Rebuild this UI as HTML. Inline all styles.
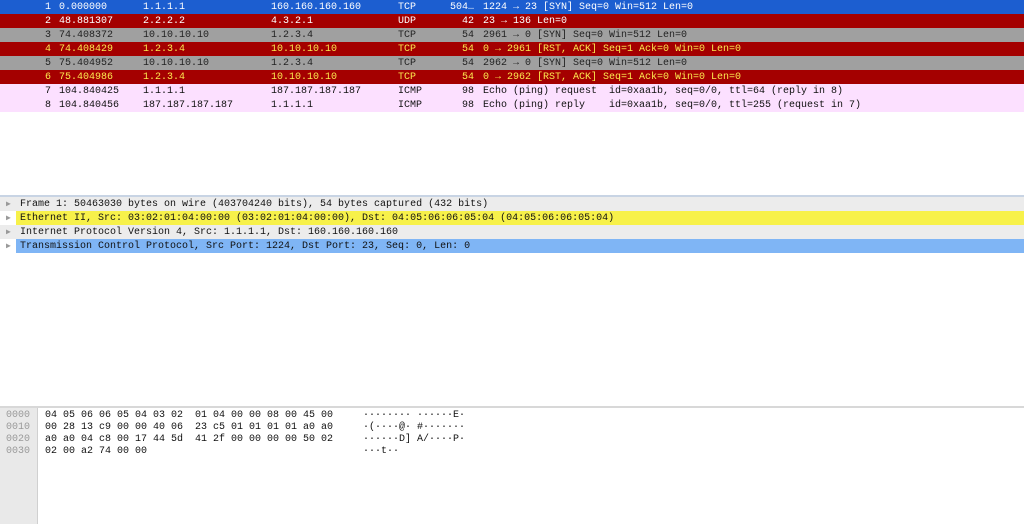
<!DOCTYPE html>
<html><head><style>
body{margin:0;width:1024px;height:524px;overflow:hidden;background:#fff;font-family:"Liberation Mono",monospace;font-size:10px;position:relative}
.r{position:absolute;left:0;width:1024px;height:14px;line-height:15px;white-space:pre}
.r span{position:absolute;top:0}
.no{right:973px;text-align:right}
.t{left:59px}.s{left:143px}.d{left:271px}.p{left:398px}.l{right:550px;text-align:right}.i{left:483px}
.blue{background:#1c5ed0;color:#fff}
.red{background:#a40000;color:#fff}
.redy{background:#a40000;color:#fce94f}
.gray{background:#a0a0a0;color:#222}
.pink{background:#fce0ff;color:#111}
.det{position:absolute;left:0;width:1024px;height:14px;line-height:16px;white-space:pre;color:#111}
.det .a{position:absolute;left:6px;top:0;color:#999;font-size:8px}
.det .tx{position:absolute;left:16px;right:0;top:0;height:14px;padding-left:4px}
.hx{position:absolute;white-space:pre;line-height:12px;color:#111}
</style></head><body>
<div class="r blue" style="top:0"><span class="no">1</span><span class="t">0.000000</span><span class="s">1.1.1.1</span><span class="d">160.160.160.160</span><span class="p">TCP</span><span class="l">504…</span><span class="i">1224 → 23 [SYN] Seq=0 Win=512 Len=0</span></div>
<div class="r red" style="top:14px"><span class="no">2</span><span class="t">48.881307</span><span class="s">2.2.2.2</span><span class="d">4.3.2.1</span><span class="p">UDP</span><span class="l">42</span><span class="i">23 → 136 Len=0</span></div>
<div class="r gray" style="top:28px"><span class="no">3</span><span class="t">74.408372</span><span class="s">10.10.10.10</span><span class="d">1.2.3.4</span><span class="p">TCP</span><span class="l">54</span><span class="i">2961 → 0 [SYN] Seq=0 Win=512 Len=0</span></div>
<div class="r redy" style="top:42px"><span class="no">4</span><span class="t">74.408429</span><span class="s">1.2.3.4</span><span class="d">10.10.10.10</span><span class="p">TCP</span><span class="l">54</span><span class="i">0 → 2961 [RST, ACK] Seq=1 Ack=0 Win=0 Len=0</span></div>
<div class="r gray" style="top:56px"><span class="no">5</span><span class="t">75.404952</span><span class="s">10.10.10.10</span><span class="d">1.2.3.4</span><span class="p">TCP</span><span class="l">54</span><span class="i">2962 → 0 [SYN] Seq=0 Win=512 Len=0</span></div>
<div class="r redy" style="top:70px"><span class="no">6</span><span class="t">75.404986</span><span class="s">1.2.3.4</span><span class="d">10.10.10.10</span><span class="p">TCP</span><span class="l">54</span><span class="i">0 → 2962 [RST, ACK] Seq=1 Ack=0 Win=0 Len=0</span></div>
<div class="r pink" style="top:84px"><span class="no">7</span><span class="t">104.840425</span><span class="s">1.1.1.1</span><span class="d">187.187.187.187</span><span class="p">ICMP</span><span class="l">98</span><span class="i">Echo (ping) request  id=0xaa1b, seq=0/0, ttl=64 (reply in 8)</span></div>
<div class="r pink" style="top:98px"><span class="no">8</span><span class="t">104.840456</span><span class="s">187.187.187.187</span><span class="d">1.1.1.1</span><span class="p">ICMP</span><span class="l">98</span><span class="i">Echo (ping) reply    id=0xaa1b, seq=0/0, ttl=255 (request in 7)</span></div>

<div style="position:absolute;top:195px;left:0;width:1024px;height:2px;background:#c8d4e4"></div>
<div class="det" style="top:197px;background:#ececec"><span class="a">▶</span><span class="tx">Frame 1: 50463030 bytes on wire (403704240 bits), 54 bytes captured (432 bits)</span></div>
<div class="det" style="top:211px"><span class="a">▶</span><span class="tx" style="background:#f7f14a">Ethernet II, Src: 03:02:01:04:00:00 (03:02:01:04:00:00), Dst: 04:05:06:06:05:04 (04:05:06:06:05:04)</span></div>
<div class="det" style="top:225px;background:#ececec"><span class="a">▶</span><span class="tx">Internet Protocol Version 4, Src: 1.1.1.1, Dst: 160.160.160.160</span></div>
<div class="det" style="top:239px"><span class="a">▶</span><span class="tx" style="background:#7fb5f5">Transmission Control Protocol, Src Port: 1224, Dst Port: 23, Seq: 0, Len: 0</span></div>

<div style="position:absolute;top:406px;left:0;width:1024px;height:2px;background:#d8d8d8"></div>
<div style="position:absolute;top:408px;left:0;width:37px;height:116px;background:#e9e9e9;border-right:1px solid #d0d0d0"></div>
<div class="hx" style="top:410px;left:6px;color:#999">0000
0010
0020
0030</div>
<div class="hx" style="top:410px;left:45px">04 05 06 06 05 04 03 02  01 04 00 00 08 00 45 00
00 28 13 c9 00 00 40 06  23 c5 01 01 01 01 a0 a0
a0 a0 04 c8 00 17 44 5d  41 2f 00 00 00 00 50 02
02 00 a2 74 00 00</div>
<div class="hx" style="top:410px;left:363px">········ ······E·
·(····@· #·······
······D] A/····P·
···t··</div>
</body></html>
